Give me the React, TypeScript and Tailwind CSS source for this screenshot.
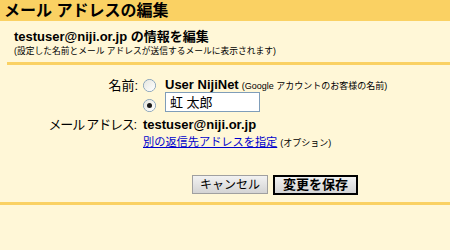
import React from "react";

const font = { fontFamily: '"Liberation Sans", "Noto Sans CJK JP", sans-serif' };

function Radio({ checked }: { checked?: boolean }) {
  return (
    <span className="relative inline-flex h-[13px] w-[13px] shrink-0 items-center justify-center rounded-full border border-[#7f9db9] bg-gradient-to-br from-[#dcdcd6] to-white">
      <span className="flex h-[11px] w-[11px] items-center justify-center rounded-full bg-gradient-to-br from-[#e6e6e0] to-white">
        {checked && <span className="h-[5px] w-[5px] rounded-full bg-[#1a1a1a]" />}
      </span>
    </span>
  );
}

export default function App() {
  return (
    <div className="w-[450px] h-[250px] overflow-hidden bg-[#fff7d7] text-black" style={font}>
      <div className="h-[21px] bg-[#fad163] pl-[4px] text-[16px] font-bold leading-[21px]">
        メール アドレスの編集
      </div>
      <div className="pl-[14px] pt-[8px]">
        <div className="text-[13px] font-bold leading-[15px]">testuser@niji.or.jp の情報を編集</div>
        <div className="mt-[1px] text-[8.75px] leading-[12px]">(設定した名前とメール アドレスが送信するメールに表示されます)</div>
      </div>
      <div className="ml-[7px] mt-[5px] h-[3px] bg-[#fad163]" />
      <div className="mt-[14px] grid grid-cols-[138px_1fr] gap-x-[5px] text-[13px] leading-[15px]">
        <div className="flex h-[13px] items-center justify-end">名前:</div>
        <div className="flex h-[13px] items-center gap-[9px]">
          <Radio />
          <span>
            <span className="font-bold">User NijiNet</span>
            <span className="ml-[3px] text-[9px]">(Google アカウントのお客様の名前)</span>
          </span>
        </div>
        <div />
        <div className="flex h-[20px] items-end gap-[9px]">
          <span><Radio checked /></span>
          <div className="flex h-[20px] w-[95px] items-center border border-[#7f9db9] bg-white pl-[4px] text-[13px]">
            虹 太郎
          </div>
        </div>
        <div className="mt-[5px] pr-[2px] text-right tracking-[-1.2px]">メール アドレス:</div>
        <div className="mt-[5px] font-bold">testuser@niji.or.jp</div>
        <div />
        <div className="mt-[2px]">
          <a className="text-[11.2px] text-[#0000cc] underline">別の返信先アドレスを指定</a>
          <span className="ml-[3px] text-[9px]">(オプション)</span>
        </div>
      </div>
      <div className="mt-[24px] flex gap-[5px] pl-[192px]">
        <button className="flex h-[19px] w-[76px] items-center justify-center border border-[#a0a0a0] bg-gradient-to-b from-[#f2f2f2] to-[#d4d4d4] text-[12px]">
          キャンセル
        </button>
        <button className="flex h-[20px] w-[85px] items-center justify-center border-2 border-black bg-gradient-to-b from-[#f2f2f2] to-[#d4d4d4] text-[13px] font-bold">
          変更を保存
        </button>
      </div>
      <div className="mt-[7px] h-[3px] bg-[#fad163]" />
    </div>
  );
}
